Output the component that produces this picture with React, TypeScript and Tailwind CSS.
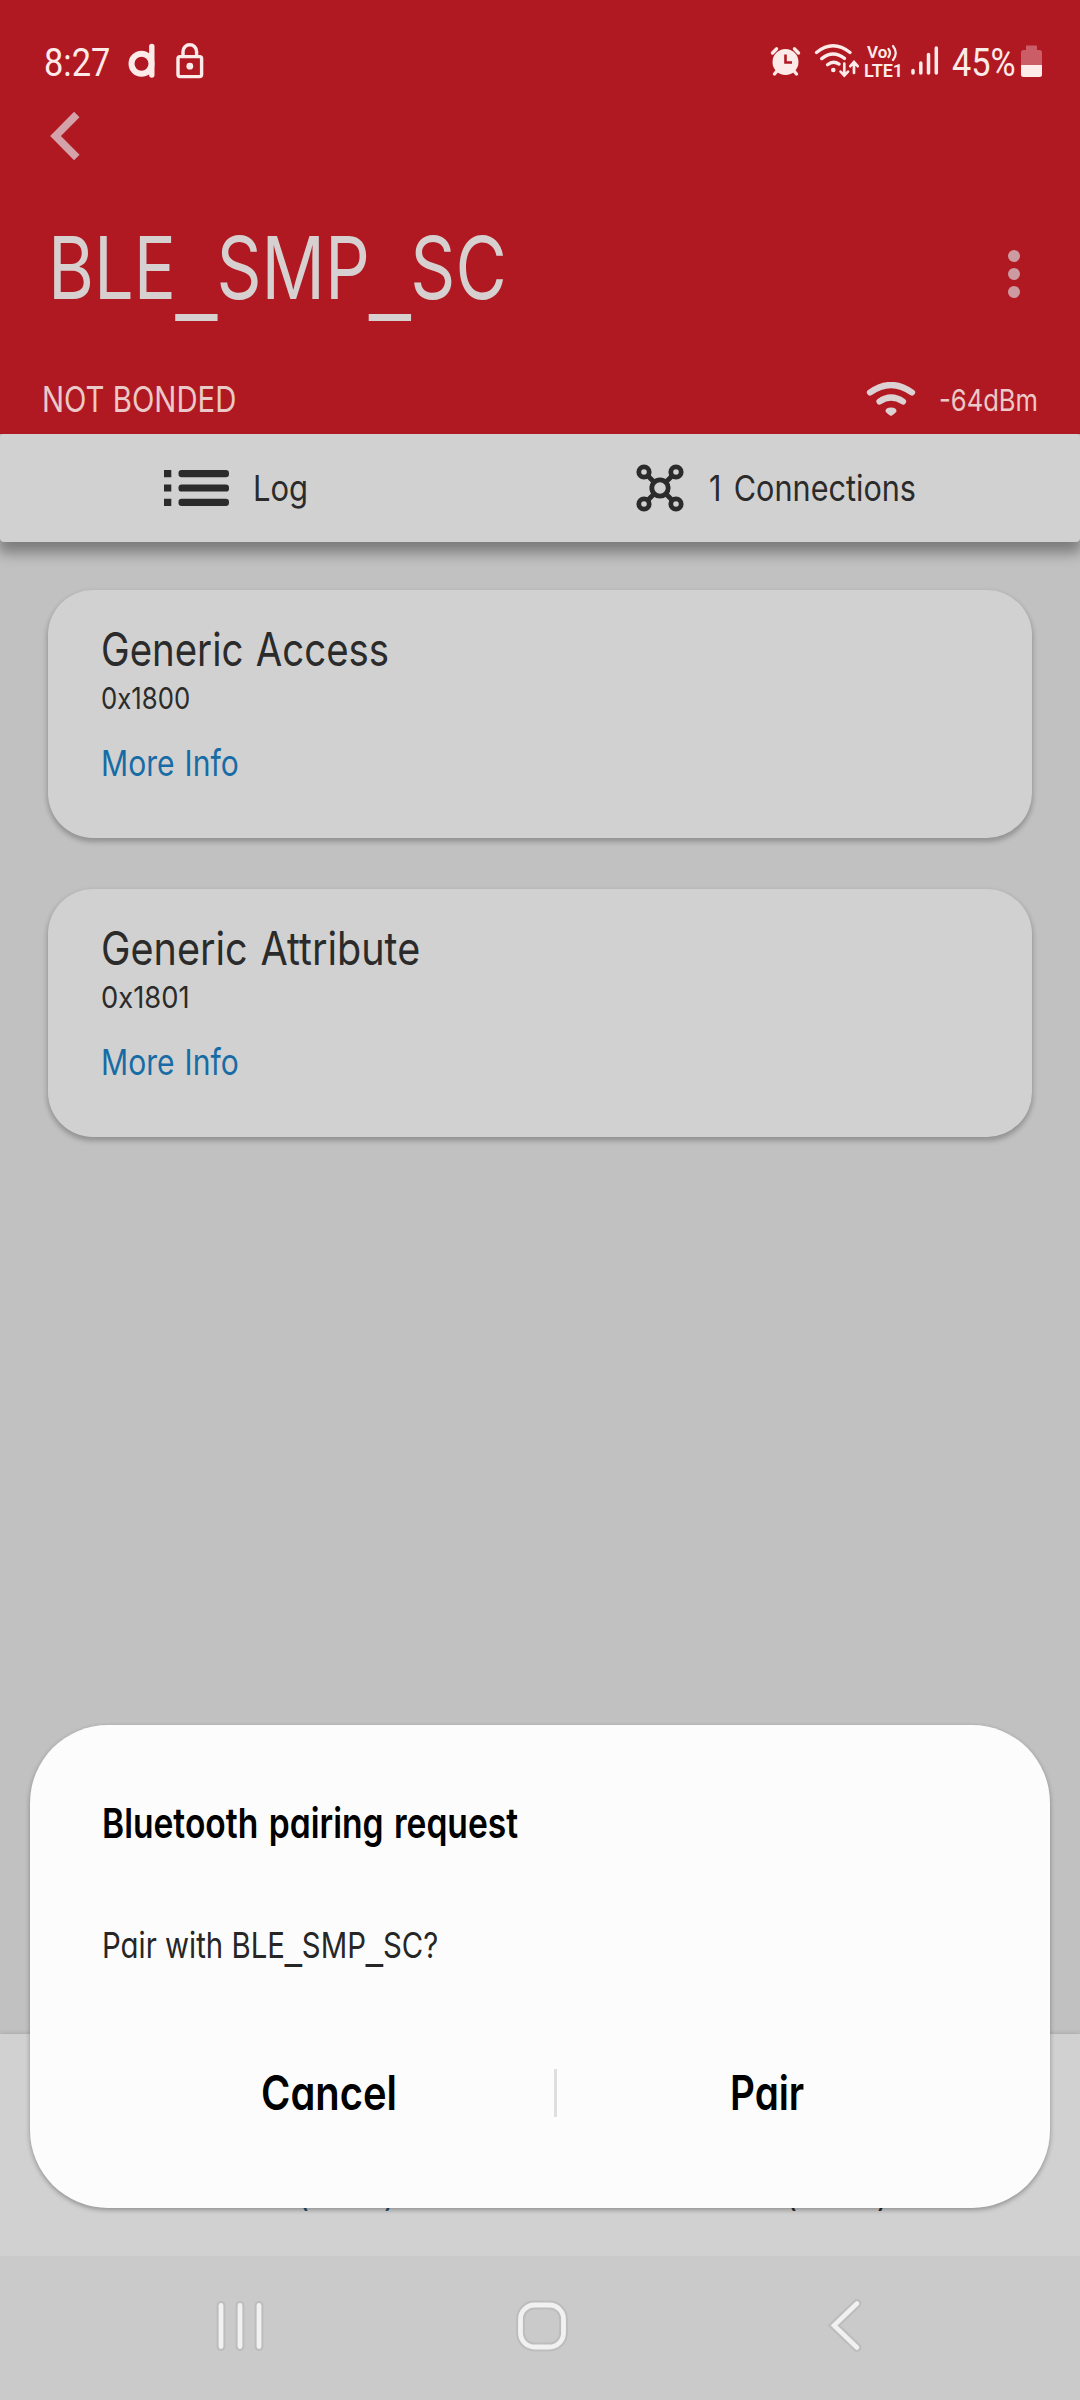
import { useLayoutEffect, useRef, useState } from "react";

/* Single line of text, condensed horizontally to fill the width of its box.
   Underscores are drawn wide and low, well under the baseline. */
function Fit({ text, className, color = "" }: { text: string; className: string; color?: string }) {
  const box = useRef<HTMLDivElement>(null);
  const ink = useRef<HTMLSpanElement>(null);
  const [k, setK] = useState(1);
  useLayoutEffect(() => {
    if (box.current && ink.current) setK(box.current.offsetWidth / ink.current.offsetWidth);
  }, [text]);
  return (
    <div ref={box} className={`flex shrink-0 items-center whitespace-nowrap ${className} ${color}`}>
      <span ref={ink} className="inline-block origin-left" style={{ transform: `scaleX(${k})` }}>
        {text.split(/(_)/).map((part, i) =>
          part === "_" ? (
            <span key={i} className="mx-[0.06em] inline-block translate-y-[0.17em] scale-x-[1.32]">
              _
            </span>
          ) : (
            part
          ),
        )}
      </span>
    </div>
  );
}

function StatusBar() {
  return (
    <div className="flex h-[100px] items-start pt-[38px] pl-[44px] text-[#fdebea]">
      <Fit text="8:27" className="mt-px h-[48px] w-[66px] font-[Roboto] text-[38px]" />
      <svg className="ml-[17px] h-[48px] w-[30px]" viewBox="127 38 30 48" fill="none" stroke="currentColor">
        <circle cx="141.5" cy="63.8" r="10" strokeWidth="6" />
        <path d="M151.8 46.5V75" strokeWidth="5.4" strokeLinecap="round" />
      </svg>
      <svg className="ml-[17px] h-[48px] w-[32px]" viewBox="174 38 32 48" fill="none" stroke="currentColor" strokeWidth="3.4">
        <rect x="178" y="56.6" width="23.6" height="20" rx="2" />
        <path d="M183 56V51.5a6.8 6.8 0 0 1 13.6 0V56" />
        <circle cx="189.8" cy="66.2" r="3.4" fill="currentColor" stroke="none" />
      </svg>
      <svg className="ml-[563px] h-[48px] w-[34px]" viewBox="769 38 34 48" fill="none" stroke="currentColor" strokeLinecap="round">
        <circle cx="785.5" cy="62" r="13" fill="currentColor" stroke="none" />
        <path d="M772.5 53l4-4.2M798.500 53l-4-4.200M777 71l-2.500 3M794 71l2.500 3" strokeWidth="3.4" />
        <path d="M785.500 54.500v8h6.500" stroke="#b11922" strokeWidth="2.600" strokeLinecap="butt" />
      </svg>
      <svg className="ml-[11px] h-[48px] w-[46px]" viewBox="814 38 46 48" fill="none" stroke="currentColor" strokeWidth="3.3" strokeLinecap="round">
        <path d="M816.500 52.500q16.500-13.500 33.500 0" />
        <path d="M821.700 58.600q11.300-9.200 22.800-.2" />
        <path d="M827.500 64.700q5.800-4.600 11.600-.6" />
        <circle cx="833.3" cy="70" r="2.3" fill="currentColor" stroke="none" />
        <path d="M844.300 63.500V75M840.600 71.600l3.700 3.900 3.700-3.900M854 73V62.500M850.300 66.200L854 62l3.700 4.200" strokeWidth="2.700" />
      </svg>
      <div className="ml-[4px] flex h-[48px] w-[39px] flex-col pt-[8px]">
        <div className="flex h-[14px] items-center">
          <Fit text="Vo" className="ml-[3px] h-[14px] w-[20px] font-[Roboto] text-[17px] font-semibold" />
          <svg className="h-[18px] w-[12px]" viewBox="0 0 12 18" fill="none" stroke="currentColor" strokeWidth="2.200" strokeLinecap="round">
            <path d="M1.500 5q3 4 0 8M6 2q5.500 7 0 14" />
          </svg>
        </div>
        <Fit text="LTE1" className="mt-[3px] h-[14px] w-[39px] font-[Roboto] text-[18px] font-semibold" />
      </div>
      <svg className="ml-[7px] h-[48px] w-[30px]" viewBox="910 38 30 48" stroke="currentColor" strokeWidth="3.500" strokeLinecap="round">
        <path d="M913 70.500v2.500M920.800 63v10M928.500 54.500V73M936.300 48v25" />
      </svg>
      <Fit text="45%" className="ml-[12px] mt-px h-[48px] w-[64px] font-[Roboto] text-[38px]" />
      <svg className="ml-[4px] h-[48px] w-[23px]" viewBox="1020 38 23 48">
        <path d="M1026.500 45.500h9.500q1 0 1 1v3.500h2.500q2.500 0 2.500 2.500V66h-21V52.500q0-2.500 2.500-2.500h2.500v-3.500q0-1 .500-1z" fill="#cb5d67" />
        <path d="M1021 65h21v9.500q0 2.500-2.500 2.500h-16q-2.500 0-2.500-2.500z" fill="currentColor" />
      </svg>
    </div>
  );
}

function Header() {
  return (
    <header className="flex h-[434px] flex-col bg-[#b11922]">
      <StatusBar />
      <svg className="mt-[10px] ml-[48px] h-[52px] w-[34px]" viewBox="48 110 34 52" fill="none" stroke="#d3a3a9" strokeWidth="7.600">
        <path d="M76.800 114.500L55.500 136l21.300 21.500" />
      </svg>
      <div className="mt-[55px] flex h-[101px] items-center justify-between pr-[60px] pl-[48px]">
        <Fit text="BLE_SMP_SC" className="h-[101px] w-[459px] text-[86.5px]" color="text-[#d7d0d0]" />
        <svg className="mt-[13px] h-[50px] w-[12px]" viewBox="0 0 12 50" fill="#cb9ba1">
          <circle cx="6" cy="7" r="6" />
          <circle cx="6" cy="25" r="6" />
          <circle cx="6" cy="43" r="6" />
        </svg>
      </div>
      <div className="mt-[57px] flex h-[50px] items-center pl-[42px]">
        <Fit text="NOT BONDED" className="h-[50px] w-[194px] text-[35.5px]" color="text-[#e9cac8]" />
        <svg className="ml-[630px] h-[36px] w-[50px]" viewBox="866 382 50 36" fill="none" stroke="#dcd2d3" strokeLinecap="round" strokeWidth="6.200">
          <path d="M870 392.500q21-15 42 0" />
          <path d="M879.500 401.500q11.500-8 23.500 0" />
          <path d="M885.500 411q0-3.500 5.500-3.500t5.500 3.500q0 1.500-5.500 5-5.500-3.500-5.500-5z" fill="#dcd2d3" stroke="none" />
        </svg>
        <Fit text="-64dBm" className="ml-[23px] h-[50px] w-[99px] text-[30px]" color="text-[#e9cac8]" />
      </div>
    </header>
  );
}

function Tabs() {
  return (
    <div className="bg-[#c1c1c1]">
      <nav className="relative flex h-[108px] items-center rounded-[4px] bg-[#d1d1d1] text-[#2b2b2b] shadow-[0_9px_14px_2px_rgba(0,0,0,0.36)] [clip-path:inset(0_0_-40px_0)]">
        <svg className="ml-[164px] h-[36px] w-[65px]" viewBox="164 470 65 36" fill="currentColor">
          <path d="M164 470h7.300v7.200H164zM164 484.400h7.300v7.200H164zM164 498.800h7.300v7.200H164z" />
          <rect x="178.500" y="470" width="50.500" height="7.200" rx="3.200" />
          <rect x="178.500" y="484.400" width="50.500" height="7.200" rx="3.200" />
          <rect x="178.500" y="498.800" width="50.500" height="7.200" rx="3.200" />
        </svg>
        <Fit text="Log" className="mt-[2px] ml-[24px] h-[50px] w-[55px] text-[35.5px]" />
        <svg className="ml-[327px] h-[50px] w-[50px]" viewBox="-25 -25 50 50" fill="none" stroke="currentColor" strokeWidth="4.800">
          <circle r="8.200" />
          <circle cx="-16" cy="-16" r="5.200" />
          <circle cx="16" cy="-16" r="5.200" />
          <circle cx="-16" cy="16" r="5.200" />
          <circle cx="16" cy="16" r="5.200" />
          <path d="M-12-12L-6-6M12-12L6-6M-12 12L-6 6M12 12L6 6" />
        </svg>
        <Fit text="1 Connections" className="mt-[2px] ml-[24px] h-[50px] w-[207px] text-[35.5px] [word-spacing:0.12em]" />
      </nav>
    </div>
  );
}

function ServiceCard({ name, uuid, nameWidth }: { name: string; uuid: string; nameWidth: string }) {
  return (
    <section className="flex h-[248px] flex-col rounded-[45px] bg-[#d1d1d1] pl-[53px] text-[#2b2b2b] shadow-[0_3px_5px_1px_rgba(0,0,0,0.24)] [word-spacing:0.12em]">
      <Fit text={name} className={`mt-[34px] h-[50px] text-[46px] ${nameWidth}`} />
      <Fit text={uuid} className="mt-[8px] h-[32px] w-[89px] text-[29.5px]" />
      <Fit text="More Info" className="mt-[25px] h-[50px] w-[138px] text-[35.5px]" color="text-[#176ca6]" />
    </section>
  );
}

function Dialog() {
  return (
    <div className="absolute top-[1725px] left-[30px] flex h-[483px] w-[1020px] flex-col rounded-[78px] bg-[#fcfcfc] text-black shadow-[0_2px_5px_rgba(0,0,0,0.32)]">
      <Fit text="Bluetooth pairing request" className="mt-[73px] ml-[72px] h-[50px] w-[416px] text-[41.5px] font-semibold [word-spacing:0.06em]" />
      <Fit text="Pair with BLE_SMP_SC?" className="mt-[73px] ml-[72px] h-[50px] w-[336px] text-[35.5px]" color="text-[#262626]" />
      <div className="mt-[92px] flex h-[60px] items-center">
        <Fit text="Cancel" className="ml-[231px] h-[60px] w-[136px] text-[47.500px] font-semibold" />
        <div className="ml-[157px] h-[48px] w-[3px] bg-[#dfdfdf]" />
        <Fit text="Pair" className="ml-[173px] h-[60px] w-[74px] text-[47.500px] font-semibold" />
      </div>
    </div>
  );
}

function SystemNav() {
  return (
    <nav className="flex h-[144px] items-center bg-[#cacaca] pb-[4px]">
      <svg className="ml-[213px] h-[56px] w-[54px]" viewBox="-27 -28 54 56" strokeLinecap="round">
        <path d="M-19-20.500v41M0-20.500v41M19-20.500v41" stroke="#bdbdbd" strokeWidth="9" />
        <path d="M-19-20.500v41M0-20.500v41M19-20.500v41" stroke="#f1f1f1" strokeWidth="4.800" />
      </svg>
      <svg className="ml-[247px] h-[56px] w-[56px]" viewBox="-28 -28 56 56" fill="none">
        <rect x="-21.500" y="-21" width="43" height="42" rx="14" stroke="#bdbdbd" strokeWidth="8.800" />
        <rect x="-21.500" y="-21" width="43" height="42" rx="14" stroke="#f1f1f1" strokeWidth="4.800" />
      </svg>
      <svg className="ml-[256px] h-[56px] w-[40px]" viewBox="826 2299 40 56" fill="none" strokeLinecap="round">
        <path d="M857 2304.500L834 2326.500l23 22" stroke="#bdbdbd" strokeWidth="8.800" />
        <path d="M857 2304.500L834 2326.500l23 22" stroke="#f1f1f1" strokeWidth="4.600" />
      </svg>
    </nav>
  );
}

export default function App() {
  return (
    <div className="relative flex h-[2400px] w-[1080px] flex-col overflow-hidden bg-[#c1c1c1] font-[Inter,sans-serif] [font-feature-settings:'cv11']">
      <Header />
      <Tabs />
      <main className="flex flex-1 flex-col gap-[51px] px-[48px] pt-[48px]">
        <ServiceCard name="Generic Access" uuid="0x1800" nameWidth="w-[288px]" />
        <ServiceCard name="Generic Attribute" uuid="0x1801" nameWidth="w-[319px]" />
      </main>
      <div className="flex h-[222px] items-end bg-[#d1d1d1] pb-[42px] text-[30px] leading-[36px] shadow-[0_-1px_4px_rgba(0,0,0,0.12)]">
        <div className="ml-[298px] flex w-[97px] justify-between text-[#24506f]">
          <span>(</span>
          <span>)</span>
        </div>
        <div className="ml-[391px] flex w-[102px] justify-between text-[#2b2b2b]">
          <span>(</span>
          <span>)</span>
        </div>
      </div>
      <SystemNav />
      <Dialog />
    </div>
  );
}
